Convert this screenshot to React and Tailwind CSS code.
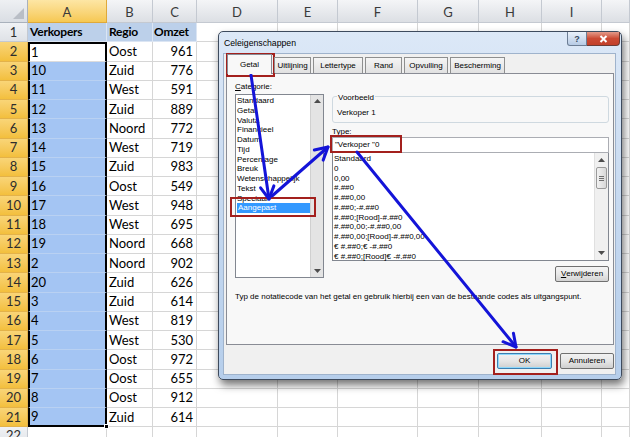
import React from 'react';

const rows = [
  ['1', 'Oost', 961], ['10', 'Zuid', 776], ['11', 'West', 591], ['12', 'Zuid', 889],
  ['13', 'Noord', 772], ['14', 'West', 719], ['15', 'Zuid', 983], ['16', 'Oost', 549],
  ['17', 'West', 948], ['18', 'West', 695], ['19', 'Noord', 668], ['2', 'Noord', 902],
  ['20', 'Zuid', 626], ['3', 'Zuid', 614], ['4', 'West', 819], ['5', 'West', 530],
  ['6', 'Oost', 972], ['7', 'Oost', 655], ['8', 'Oost', 912], ['9', 'Zuid', 614],
];

const letters = ['A', 'B', 'C', 'D', 'E', 'F', 'G', 'H', 'I', ''];

const categories = [
  'Standaard', 'Getal', 'Valuta', 'Financieel', 'Datum', 'Tijd', 'Percentage',
  'Breuk', 'Wetenschappelijk', 'Tekst', 'Speciaal', 'Aangepast',
];

const types = [
  'Standaard', '0', '0,00', '#.##0', '#.##0,00', '#.##0;-#.##0', '#.##0;[Rood]-#.##0',
  '#.##0,00;-#.##0,00', '#.##0,00;[Rood]-#.##0,00', '€ #.##0;€ -#.##0', '€ #.##0;[Rood]€ -#.##0',
];

const tabs = [
  { label: 'Getal', w: 'w-[45px]' },
  { label: 'Uitlijning', w: 'w-[37px]' },
  { label: 'Lettertype', w: 'w-[50px]' },
  { label: 'Rand', w: 'w-[37px]' },
  { label: 'Opvulling', w: 'w-[44px]' },
  { label: 'Bescherming', w: 'w-[55px]' },
];

function RowHead({ n, hot }) {
  return (
    <div
      className={`flex items-center justify-center border-r border-b text-[13px] text-[#2d2d2d] ${
        hot
          ? 'border-[#e3b24a] bg-gradient-to-b from-[#f9d577] to-[#f3bf3c]'
          : 'border-[#c4c9d1] bg-gradient-to-b from-[#f0f2f5] to-[#dfe2e7]'
      }`}
    >
      {n}
    </div>
  );
}

function Empty() {
  return <div className="border-r border-b border-[#d6d6d6] bg-white" />;
}

function Sheet() {
  return (
    <div className="grid grid-cols-[28px_79px_46px_44px_81px_60px_80px_61px_63px_60px_28px] grid-rows-[23px_repeat(22,19.25px)] font-['Lato',sans-serif] text-[13px] leading-none text-black">
      {/* corner */}
      <div className="relative border-r border-b border-[#a9b1bc] bg-gradient-to-b from-[#eef0f3] to-[#dadee4]">
        <div className="absolute right-[3px] bottom-[3px] border-l-[11px] border-b-[11px] border-l-transparent border-b-[#b9bec6]" />
      </div>
      {letters.map((l, i) => (
        <div
          key={'h' + i}
          className={`flex items-center justify-center pt-[3px] border-r border-b text-[13px] text-[#3a3a3a] ${
            i === 0
              ? 'border-[#dfa93a] bg-gradient-to-b from-[#fde6a4] to-[#f6c851]'
              : 'border-[#c4c9d1] bg-gradient-to-b from-[#f4f5f7] to-[#dcdfe4]'
          }`}
        >
          {l}
        </div>
      ))}

      {/* row 1 */}
      <RowHead n={1} />
      <div className="flex items-center pl-[2px] text-[12px] font-bold tracking-[-0.2px] bg-[#bcd0ea] border-r border-b border-[#dbe5f3]">Verkopers</div>
      <div className="flex items-center pl-[2px] text-[12px] font-bold tracking-[-0.2px] bg-[#bcd0ea] border-r border-b border-[#dbe5f3]">Regio</div>
      <div className="flex items-center pl-[1px] text-[12px] font-bold tracking-[-0.2px] bg-[#bcd0ea] border-r border-b border-[#dbe5f3]">Omzet</div>
      {Array.from({ length: 7 }).map((_, i) => <Empty key={'r1' + i} />)}

      {rows.map((r, idx) => {
        const first = idx === 0;
        const last = idx === rows.length - 1;
        return (
          <React.Fragment key={'r' + idx}>
            <RowHead n={idx + 2} hot />
            <div
              className={`relative flex items-center pl-[1px] border-x-2 border-black ${
                first ? 'border-t-2 bg-white border-b border-b-[#dcdcdc]' : 'bg-[#a4c5f3]'
              } ${last ? 'border-b-2' : first ? '' : 'border-b border-b-[#b9d1f2]'}`}
            >
              {r[0]}
              {last && <div className="absolute -right-[4px] -bottom-[4px] w-[5px] h-[5px] bg-black border border-white" />}
            </div>
            <div className="flex items-center pl-[2px] bg-white border-r border-b border-[#d6d6d6]">{r[1]}</div>
            <div className="flex items-center justify-end pr-[3px] bg-white border-r border-b border-[#d6d6d6]">{r[2]}</div>
            {Array.from({ length: 7 }).map((_, i) => <Empty key={'e' + idx + i} />)}
          </React.Fragment>
        );
      })}

      {/* row 22 */}
      <div className="flex items-start justify-center pt-[2px] border-r border-b border-[#c4c9d1] bg-gradient-to-b from-[#f0f2f5] to-[#dfe2e7] text-[13px] text-[#2d2d2d]">
        22
      </div>
      {Array.from({ length: 10 }).map((_, i) => <Empty key={'r22' + i} />)}
    </div>
  );
}

function Tri({ up }) {
  return (
    <svg width="7" height="4" viewBox="0 0 7 4">
      <path d={up ? 'M0 4L3.5 0L7 4Z' : 'M0 0L3.5 4L7 0Z'} fill="#4d4d4d" />
    </svg>
  );
}

function Dialog() {
  return (
    <div className="absolute left-[218px] top-[31px] w-[404px] h-[349px] flex flex-col rounded-[5px] border border-[#3e4b5e] bg-gradient-to-b from-[#dce8f7] via-[#c6d9f0] to-[#b6ceeb] shadow-[2px_5px_9px_rgba(0,0,0,0.55)] font-['Liberation_Sans',Arial,sans-serif] text-[8px] leading-[10px] text-black">
      {/* title bar */}
      <div className="h-[21px] shrink-0 flex items-start">
        <div className="pl-[5px] pt-[6px] text-[8.7px] leading-[10px]">Celeigenschappen</div>
        <div className="ml-auto mr-[1px] flex">
          <div className="w-[20px] h-[14px] flex items-center justify-center rounded-bl-[3px] border border-t-0 border-[#6c7d94] bg-gradient-to-b from-[#eaf1fa] to-[#b7cbe5] text-[9px] font-bold text-[#34465e]">
            ?
          </div>
          <div className="w-[33px] h-[14px] flex items-center justify-center rounded-br-[4px] border border-l-0 border-t-0 border-[#6c3c36] bg-gradient-to-b from-[#e39a8a] via-[#cb4a34] to-[#c2402a]">
            <svg width="9" height="8" viewBox="0 0 9 8">
              <path d="M1.5 1L7.5 7M7.5 1L1.5 7" stroke="white" strokeWidth="2" />
            </svg>
          </div>
        </div>
      </div>

      {/* body */}
      <div className="flex-1 ml-[4px] mr-[5px] mb-[4px] flex flex-col bg-[#f0f0f0] border border-[#9fb3cc] pl-[2px] pr-[1px]">
        {/* tabs */}
        <div className="relative z-10 h-[20px] ml-[1px] flex items-end gap-[2px]">
          {tabs.map((t, i) =>
            i === 0 ? (
              <div key={t.label} className={`${t.w} h-[20px] flex items-center justify-center border-x border-t border-[#898c95] bg-[#f8f8f8]`}>
                {t.label}
              </div>
            ) : (
              <div
                key={t.label}
                className={`${t.w} h-[16px] mb-[1px] flex items-center justify-center overflow-hidden whitespace-nowrap border-x border-t border-[#8e8f8f] bg-gradient-to-b from-[#f5f5f5] to-[#e1e1e1]`}
              >
                {t.label}
              </div>
            )
          )}
        </div>

        {/* panel */}
        <div className="h-[272px] -mt-[1px] border border-[#898c95] bg-[#f8f8f8] pl-[8px] pt-[8px]">
          <div className="flex items-start">
            {/* left column */}
            <div className="w-[89px]">
              <div className="h-[12px] leading-[10px]">
                <span className="underline">C</span>ategorie:
              </div>
              <div className="h-[184px] flex border border-[#828790] bg-white">
                <div className="flex-1 pt-[1px] leading-[9.75px]">
                  {categories.map((c) =>
                    c === 'Aangepast' ? (
                      <div key={c} className="ml-[1px] pl-[1px] bg-[#3399ff] text-white">
                        {c}
                      </div>
                    ) : (
                      <div key={c} className="pl-[1px] whitespace-nowrap">
                        {c}
                      </div>
                    )
                  )}
                </div>
                <div className="w-[13px] flex flex-col items-center justify-between py-[4px] bg-[#e4e4e4] border-l border-[#d0d0d0]">
                  <Tri up />
                  <Tri />
                </div>
              </div>
            </div>

            {/* right column */}
            <div className="ml-[8px] w-[277px] flex flex-col">
              <div className="mt-[14px] h-[27px] flex flex-col border border-[#cfd9e0] rounded-[3px]">
                <div className="-mt-[4px] ml-[4px] px-[1px] self-start bg-[#f8f8f8] leading-[10px]">Voorbeeld</div>
                <div className="mt-[5px] pl-[4px] leading-[10px]">Verkoper 1</div>
              </div>
              <div className="mt-[4px] leading-[10px]">
                <span className="underline">T</span>ype:
              </div>
              <div className="h-[16px] flex items-center pl-[2px] border border-[#abadb3] bg-white">"Verkoper "0</div>
              <div className="h-[108px] flex border border-[#828790] border-t-0 bg-white">
                <div className="flex-1 pt-[1px] pl-[1px] leading-[9.75px]">
                  {types.map((t) => (
                    <div key={t} className="whitespace-nowrap">
                      {t}
                    </div>
                  ))}
                </div>
                <div className="w-[14px] flex flex-col bg-[#f0f0f0] border-l border-[#e0e0e0]">
                  <div className="h-[14px] flex items-center justify-center">
                    <Tri up />
                  </div>
                  <div className="h-[22px] mx-[1px] flex flex-col items-center justify-center gap-[1px] rounded-[2px] border border-[#9a9a9a] bg-gradient-to-r from-[#f2f2f2] to-[#d8d8d8]">
                    <div className="w-[5px] h-px bg-[#6f6f6f]" />
                    <div className="w-[5px] h-px bg-[#6f6f6f]" />
                    <div className="w-[5px] h-px bg-[#6f6f6f]" />
                  </div>
                  <div className="flex-1" />
                  <div className="h-[14px] flex items-center justify-center">
                    <Tri />
                  </div>
                </div>
              </div>
              <div className="mt-[5px] self-end w-[54px] h-[16px] flex items-center justify-center rounded-[2px] border border-[#707070] bg-gradient-to-b from-[#f4f4f4] via-[#e9e9e9] to-[#d3d3d3]">
                <span className="underline">V</span>erwijderen
              </div>
            </div>
          </div>
          <div className="mt-[9px] leading-[11px] whitespace-nowrap">
            Typ de notatiecode van het getal en gebruik hierbij een van de bestaande codes als uitgangspunt.
          </div>
        </div>

        {/* buttons */}
        <div className="mt-[8px] flex justify-end gap-[8px]">
          <div className="w-[55px] h-[16px] flex items-center justify-center rounded-[2px] border border-[#3c7fb1] shadow-[inset_0_0_0_1px_#8fd8fb] bg-gradient-to-b from-[#f2f2f2] via-[#e6e6e6] to-[#cfcfcf]">
            OK
          </div>
          <div className="w-[54px] h-[16px] flex items-center justify-center rounded-[2px] border border-[#707070] bg-gradient-to-b from-[#f2f2f2] via-[#e6e6e6] to-[#cfcfcf]">
            Annuleren
          </div>
        </div>
      </div>
    </div>
  );
}

function arrowHead(x1, y1, x2, y2, len = 14, ang = 0.5) {
  const a = Math.atan2(y2 - y1, x2 - x1);
  const p1 = [x2 - len * Math.cos(a - ang), y2 - len * Math.sin(a - ang)];
  const p2 = [x2 - len * Math.cos(a + ang), y2 - len * Math.sin(a + ang)];
  return `M${p1[0]} ${p1[1]}L${x2} ${y2}L${p2[0]} ${p2[1]}`;
}

const arrows = [
  [251, 75, 269, 199],
  [272, 196, 328, 147],
  [357, 152, 516, 347],
];

function Annotations() {
  return (
    <>
      <div className="absolute left-[226px] top-[53px] w-[49px] h-[24px] border-2 border-[#a3201d]" />
      <div className="absolute left-[230px] top-[197px] w-[86px] h-[20px] border-2 border-[#a3201d]" />
      <div className="absolute left-[330px] top-[135px] w-[72px] h-[18px] border-2 border-[#a3201d]" />
      <div className="absolute left-[493px] top-[349px] w-[65px] h-[26px] border-2 border-[#a3201d]" />
      <svg className="absolute left-0 top-0 pointer-events-none" width="630" height="437">
        {arrows.map(([x1, y1, x2, y2], i) => (
          <g key={i} stroke="#1414d8" strokeWidth="3" fill="none" strokeLinecap="round" strokeLinejoin="round">
            <path d={`M${x1} ${y1}L${x2} ${y2}`} />
            <path d={arrowHead(x1, y1, x2, y2)} />
          </g>
        ))}
      </svg>
    </>
  );
}

export default function App() {
  return (
    <div className="relative w-[630px] h-[437px] overflow-hidden bg-white">
      <Sheet />
      <Dialog />
      <Annotations />
    </div>
  );
}
